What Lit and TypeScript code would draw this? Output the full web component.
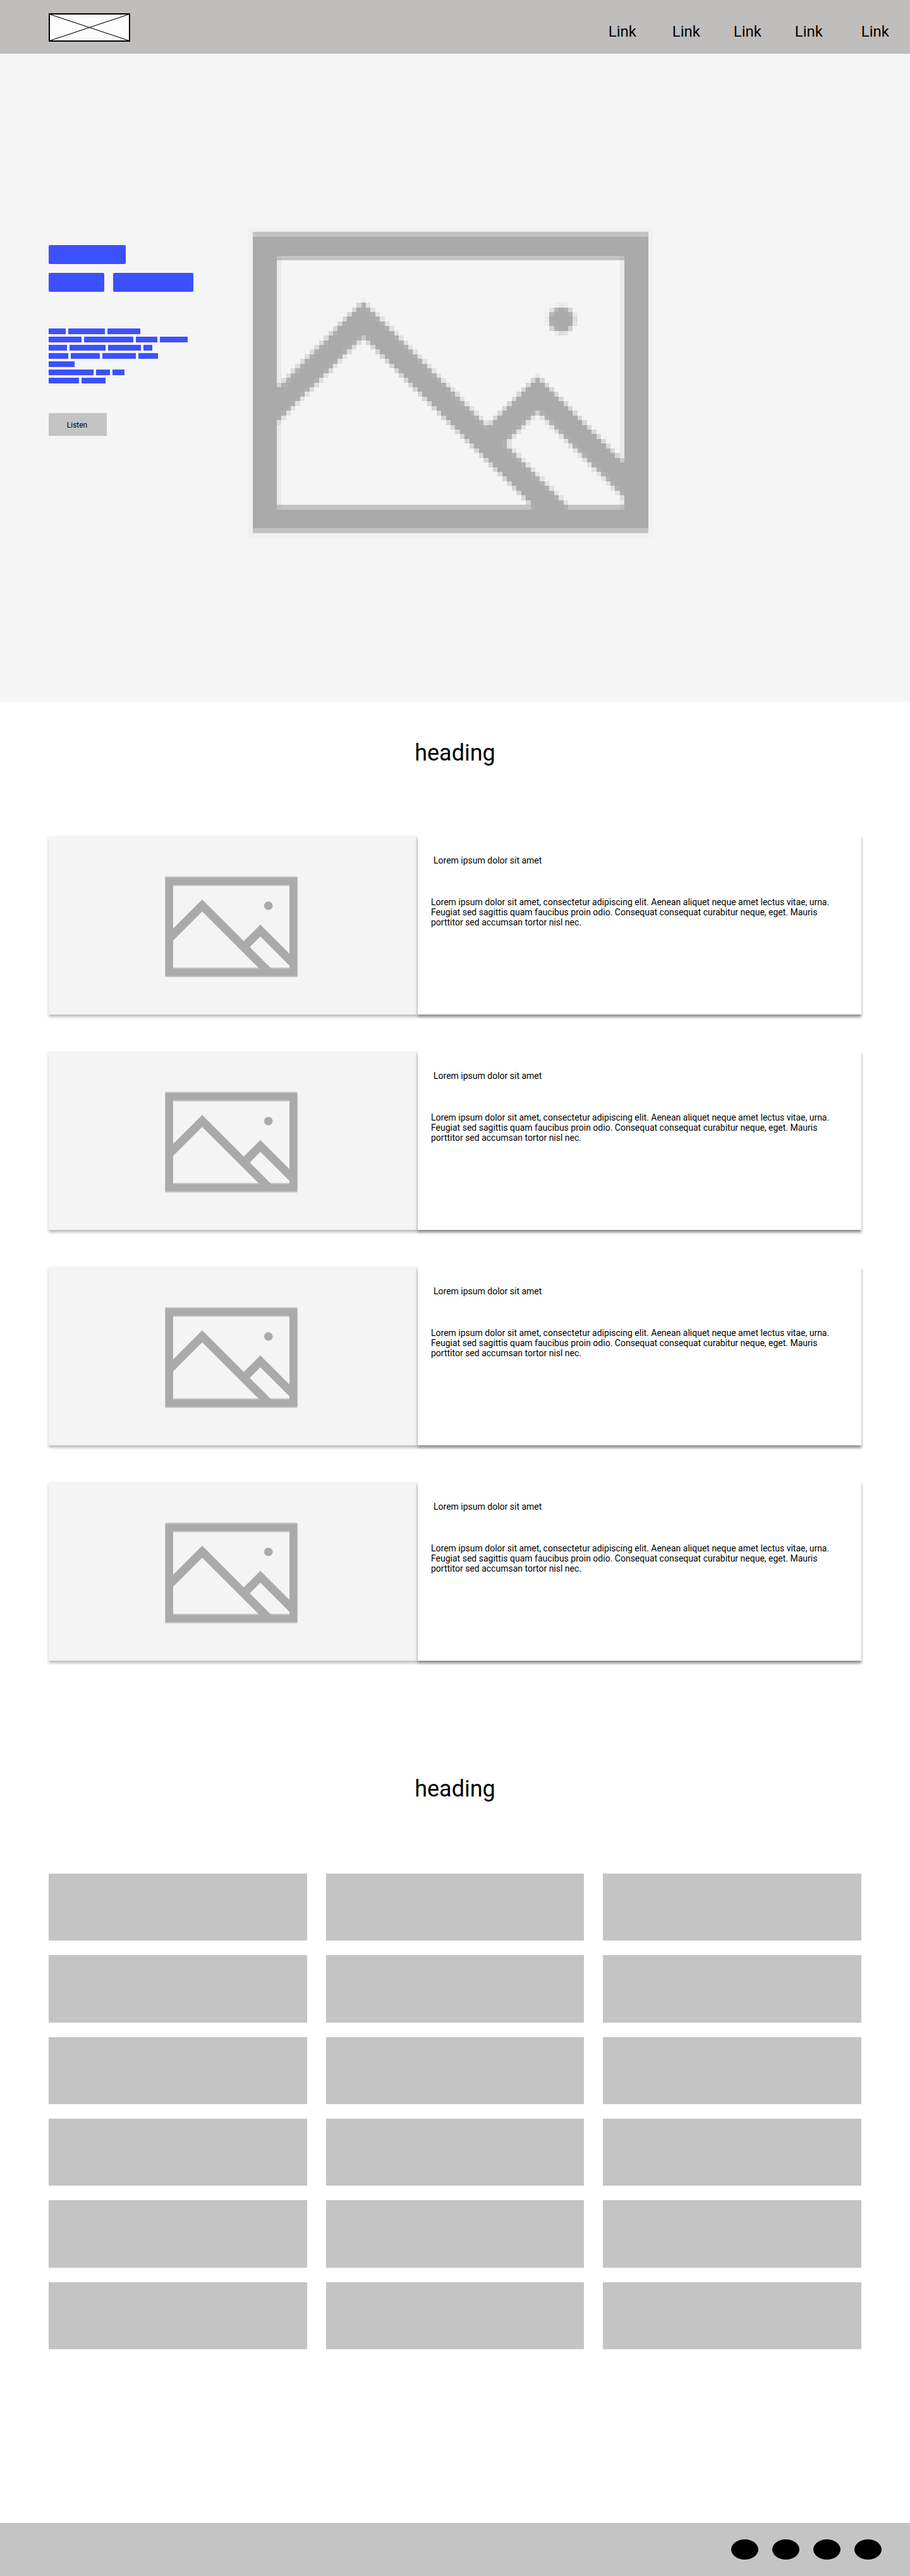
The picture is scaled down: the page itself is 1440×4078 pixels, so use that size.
import { LitElement, html, css, svg } from "lit";
import { customElement, property } from "lit/decorators.js";
import { styleMap } from "lit/directives/style-map.js";

type Point = [number, number];

const LEFT_PEAK: Point[] = [
  [4, 34.2], [23.5, 14.7], [67.6, 58.8], [60, 58.8], [23.5, 22.3], [4, 41.8],
];
const RIGHT_PEAK: Point[] = [
  [49.9, 41.2], [60.5, 30.6], [80, 50.1], [80, 57.7], [60.5, 38.2], [53.6, 45.1],
];
const FRAME = { left: 0, right: 84, top: 0.3, bottom: 63.7 };
const OPENING = { left: 5.05, right: 78.95, top: 5.7, bottom: 58.3 };
const SUN = { x: 65.6, y: 18.6, r: 2.75 };

const inPolygon = (x: number, y: number, points: Point[]): boolean => {
  let inside = false;
  for (let i = 0, j = points.length - 1; i < points.length; j = i++) {
    const [xi, yi] = points[i];
    const [xj, yj] = points[j];
    if (yi > y !== yj > y && x < ((xj - xi) * (y - yi)) / (yj - yi) + xi) inside = !inside;
  }
  return inside;
};

const inBox = (x: number, y: number, b: typeof FRAME): boolean =>
  x > b.left && x < b.right && y > b.top && y < b.bottom;

const isInk = (x: number, y: number): boolean =>
  inBox(x, y, FRAME) &&
  (!inBox(x, y, OPENING) ||
    inPolygon(x, y, LEFT_PEAK) ||
    inPolygon(x, y, RIGHT_PEAK) ||
    Math.hypot(x - SUN.x, y - SUN.y) < SUN.r);

const SAMPLES = 6;
const REACH = 1.2;
const LEVELS = 12;

/** One path per shade: each is a set of horizontal runs of whole blocks. */
const buildBlocks = (): string[] => {
  const paths: string[] = Array(LEVELS + 1).fill("");
  for (let row = 0; row < 64; row++) {
    let start = 0;
    let current = -1;
    for (let col = 0; col <= 84; col++) {
      let level = -1;
      if (col < 84) {
        let hits = 0;
        for (let i = 0; i < SAMPLES; i++) {
          for (let j = 0; j < SAMPLES; j++) {
            const x = col + 0.5 + ((i + 0.5) / SAMPLES - 0.5) * REACH;
            const y = row + 0.5 + ((j + 0.5) / SAMPLES - 0.5) * REACH;
            if (isInk(Math.min(83.9, Math.max(0.1, x)), y)) hits++;
          }
        }
        level = Math.round((hits / (SAMPLES * SAMPLES)) * LEVELS);
      }
      if (level !== current) {
        if (current > 0) paths[current] += `M${start} ${row}H${col}V${row + 1}H${start}Z`;
        start = col;
        current = level;
      }
    }
  }
  return paths;
};

const BLOCKS = buildBlocks();

const shade = (level: number): string => {
  const v = Math.round(245 - (245 - 170) * (level / LEVELS));
  return `rgb(${v},${v},${v})`;
};

const toPoints = (points: Point[]): string => points.map((p) => p.join(",")).join(" ");

@customElement("picture-placeholder")
export class PicturePlaceholder extends LitElement {
  static styles = css`
    :host {
      display: block;
    }
    .art {
      display: block;
      width: 100%;
      height: auto;
    }
  `;

  @property({ type: Boolean }) blocky = false;

  render() {
    return html`<svg class="art" viewBox="-1 -1 86 66" role="img" aria-label="Image placeholder">
      ${this.blocky
        ? svg`<g shape-rendering="crispEdges">
            <rect x="-1" y="-1" width="86" height="66" fill="#f1f1f1" />
            <rect x="0" y="0" width="84" height="64" fill="#f5f5f5" />
            ${BLOCKS.map((d, level) => (d ? svg`<path d=${d} fill=${shade(level)} />` : null))}
          </g>`
        : svg`<g fill="#aaa">
            <path fill-rule="evenodd" fill="#c2c2c2" d="M0 0H84V64H0ZM5 6V58H79V6Z" />
            <path fill-rule="evenodd" d="M0 .8H84V63.2H0ZM5 5.2V58.8H79V5.2Z" />
            <polygon points=${toPoints(LEFT_PEAK)} />
            <polygon points=${toPoints(RIGHT_PEAK)} />
            <circle cx=${SUN.x} cy=${SUN.y} r=${SUN.r} />
          </g>`}
    </svg>`;
  }
}

const TITLE_BARS = [[122], [88, 127]];
const TEXT_BARS = [
  [27, 58, 52],
  [52, 78, 34, 44],
  [29, 57, 52, 14],
  [31, 46, 53, 31],
  [41],
  [71, 22, 19],
  [48, 38],
];
const LINKS = ["Link", "Link", "Link", "Link", "Link"];
const CARDS = Array.from({ length: 4 }, () => ({
  title: "Lorem ipsum dolor sit amet",
  body:
    "Lorem ipsum dolor sit amet, consectetur adipiscing elit. Aenean aliquet neque amet lectus vitae, urna. Feugiat sed sagittis quam faucibus proin odio. Consequat consequat curabitur neque, eget. Mauris porttitor sed accumsan tortor nisl nec.",
}));
const TILES = Array.from({ length: 18 }, (_, i) => i);
const SOCIALS = ["Social link 1", "Social link 2", "Social link 3", "Social link 4"];

@customElement("app-root")
export class AppRoot extends LitElement {
  static styles = css`
    :host {
      display: block;
      background: #fff;
      color: #000;
      font-family: Roboto, "Liberation Sans", sans-serif;
      font-size: 14px;
      line-height: 16px;
    }
    * {
      box-sizing: border-box;
    }
    h2,
    h3,
    p,
    ul {
      margin: 0;
      padding: 0;
      font-weight: 400;
    }
    .header {
      display: flex;
      justify-content: space-between;
      align-items: flex-start;
      height: 85px;
      padding: 21px 33px 0 77px;
      background: #c0bdbd;
    }
    .logo {
      display: block;
      width: 129px;
      height: 45px;
    }
    .logo-art {
      display: block;
    }
    .nav {
      display: grid;
      grid-template-columns: 101px 97px 97px 105px auto;
      padding-top: 15px;
    }
    .nav-link {
      color: inherit;
      font-size: 24px;
      line-height: 28px;
      text-decoration: none;
    }
    .hero {
      display: grid;
      grid-template-columns: 316px minmax(0, 640px);
      align-items: start;
      padding: 275px 77px 260px;
      background: #f5f5f5;
    }
    .copy {
      padding-top: 28px;
    }
    .bars {
      display: grid;
    }
    .bar-row {
      display: flex;
    }
    .bar {
      background: #3d50ff;
    }
    .title-bars,
    .title-bars .bar-row {
      gap: 14px;
    }
    .title-bars .bar {
      height: 30px;
      border-radius: 2px;
    }
    .text-bars {
      margin-top: 58px;
    }
    .text-bars,
    .text-bars .bar-row {
      gap: 4px;
    }
    .text-bars .bar {
      height: 9px;
    }
    .listen {
      display: block;
      width: 92px;
      height: 36px;
      margin-top: 47px;
      padding: 2px 2px 0 0;
      border: 0;
      background: #c4c4c4;
      color: inherit;
      font: 12px/14px Roboto, "Liberation Sans", sans-serif;
      text-align: center;
    }
    .section {
      padding: 59px 77px 0;
    }
    .heading {
      font-size: 36px;
      line-height: 44px;
      text-align: center;
    }
    .cards {
      display: grid;
      gap: 58px;
      margin-top: 109px;
    }
    .card {
      display: grid;
      grid-template-columns: 584fr 702fr;
      min-height: 283px;
    }
    .card-media {
      display: flex;
      justify-content: center;
      align-items: center;
      padding: 5px 6px 0 0;
      background: #f4f4f4;
      box-shadow: 0 4px 4px rgba(0, 0, 0, 0.25);
    }
    .card-picture {
      width: 214px;
    }
    .card-text {
      padding: 31px 21px;
      background: #fff;
      box-shadow: 0 4px 4px rgba(0, 0, 0, 0.25), 0 4px 4px rgba(0, 0, 0, 0.25);
    }
    .card-title {
      padding-left: 4px;
      font-size: 14px;
    }
    .card-body {
      margin-top: 50px;
    }
    .gallery {
      padding-top: 181px;
      padding-bottom: 275px;
    }
    .tiles {
      display: grid;
      grid-template-columns: repeat(3, 1fr);
      grid-auto-rows: 1fr;
      gap: 23px 30px;
      min-height: 753px;
      margin-top: 112px;
      list-style: none;
    }
    .tile {
      background: #c4c4c4;
    }
    .footer {
      display: flex;
      justify-content: flex-end;
      gap: 22px;
      height: 84px;
      padding: 26px 45px 0 77px;
      background: #c4c4c4;
    }
    .social {
      width: 43px;
      height: 32px;
      border-radius: 50%;
      background: #000;
    }
  `;

  private bars(rows: number[][], kind: string) {
    return html`<div class="bars ${kind}">
      ${rows.map(
        (row) => html`<div class="bar-row">
          ${row.map((w) => html`<span class="bar" style=${styleMap({ width: `${w}px` })}></span>`)}
        </div>`,
      )}
    </div>`;
  }

  render() {
    return html`
      <header class="header">
        <a class="logo" href="#" aria-label="Home">
          <svg class="logo-art" width="129" height="45" viewBox="0 0 129 45">
            <rect x="1" y="1" width="127" height="43" fill="#fcfcfc" stroke="#000" stroke-width="2" />
            <path d="M1.500 1.500L127.500 43.500M1.500 43.500L127.500 1.500" stroke="#000" stroke-width="1.2" fill="none" />
          </svg>
        </a>
        <nav class="nav" aria-label="Main">
          ${LINKS.map((label) => html`<a class="nav-link" href="#">${label}</a>`)}
        </nav>
      </header>
      <main>
        <section class="hero">
          <div class="copy">
            ${this.bars(TITLE_BARS, "title-bars")} ${this.bars(TEXT_BARS, "text-bars")}
            <button class="listen" type="button">Listen</button>
          </div>
          <picture-placeholder blocky></picture-placeholder>
        </section>
        <section class="section">
          <h2 class="heading">heading</h2>
          <div class="cards">
            ${CARDS.map(
              (card) => html`<article class="card">
                <div class="card-media">
                  <picture-placeholder class="card-picture"></picture-placeholder>
                </div>
                <div class="card-text">
                  <h3 class="card-title">${card.title}</h3>
                  <p class="card-body">${card.body}</p>
                </div>
              </article>`,
            )}
          </div>
        </section>
        <section class="section gallery">
          <h2 class="heading">heading</h2>
          <ul class="tiles">
            ${TILES.map(() => html`<li class="tile"></li>`)}
          </ul>
        </section>
      </main>
      <footer class="footer">
        ${SOCIALS.map((name) => html`<a class="social" href="#" aria-label=${name}></a>`)}
      </footer>
    `;
  }
}
